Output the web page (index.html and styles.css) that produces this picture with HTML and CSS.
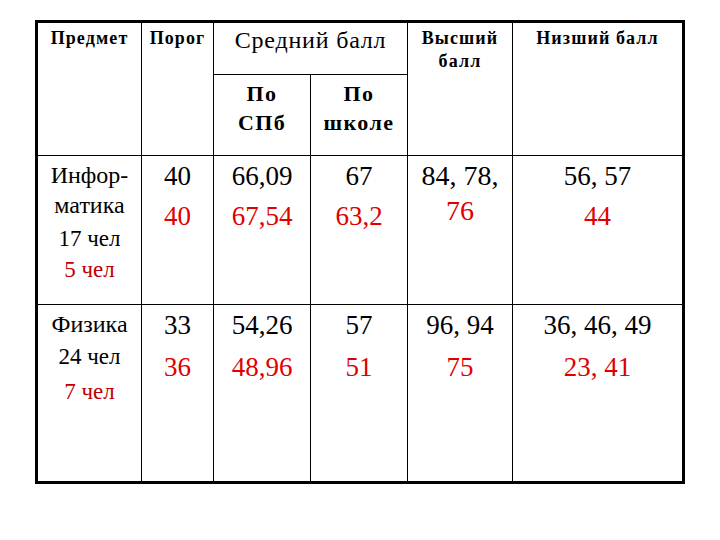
FILE: index.html
```html
<!DOCTYPE html>
<html lang="ru">
<head>
<meta charset="utf-8">
<title>Результаты</title>
<link rel="stylesheet" href="styles.css">
</head>
<body>
<div class="page">
<table class="grid">
<colgroup>
<col class="c1"><col class="c2"><col class="c3"><col class="c4"><col class="c5"><col class="c6">
</colgroup>
<tr class="rh1">
<td rowspan="2" class="h">Предмет</td>
<td rowspan="2" class="h">Порог</td>
<td colspan="2" class="avg">Средний балл</td>
<td rowspan="2" class="h">Высший<br>балл</td>
<td rowspan="2" class="h last">Низший балл</td>
</tr>
<tr class="rh2">
<td class="sub">По<br>СПб</td>
<td class="sub">По<br>школе</td>
</tr>
<tr class="r1">
<td class="subj first">
<div class="nm">Инфор-<br>матика</div>
<div class="cnt m4">17 чел</div>
<div class="cnt red2 m1">5 чел</div>
</td>
<td class="d"><div class="v">40</div><div class="v red">40</div></td>
<td class="d"><div class="v">66,09</div><div class="v red">67,54</div></td>
<td class="d"><div class="v">67</div><div class="v red">63,2</div></td>
<td class="d tight"><div class="v">84, 78,</div><div class="v red">76</div></td>
<td class="d last"><div class="v">56, 57</div><div class="v red">44</div></td>
</tr>
<tr class="r2">
<td class="subj first">
<div class="nm">Физика</div>
<div class="cnt m3">24 чел</div>
<div class="cnt red2 m5">7 чел</div>
</td>
<td class="d"><div class="v">33</div><div class="v red m2">36</div></td>
<td class="d"><div class="v">54,26</div><div class="v red m2">48,96</div></td>
<td class="d"><div class="v">57</div><div class="v red m2">51</div></td>
<td class="d"><div class="v">96, 94</div><div class="v red m2">75</div></td>
<td class="d last"><div class="v">36, 46, 49</div><div class="v red m2">23, 41</div></td>
</tr>
</table>
</div>
</body>
</html>
```
FILE: styles.css
```css
html, body {
  margin: 0;
  padding: 0;
  background: #ffffff;
}
body,
.grid,
.grid td,
.grid div {
  font-family: "Liberation Serif", "Times New Roman", serif;
  color: #000000;
}
.page {
  padding: 20px 0 0 35px;
}
.grid {
  border-collapse: separate;
  border-spacing: 0;
  table-layout: fixed;
  width: 650px;
  border: 3px solid #000000;
}
.c1 { width: 104px; }
.c2 { width: 72px; }
.c3 { width: 97px; }
.c4 { width: 97px; }
.c5 { width: 105px; }
.c6 { width: 169px; }

.grid td {
  padding: 0;
  vertical-align: top;
  text-align: center;
  border-right: 1px solid #000000;
  border-bottom: 1px solid #000000;
  box-sizing: border-box;
}
.grid td.last { border-right: none; }
.grid tr.r2 td { border-bottom: none; }

.rh1 { height: 52px; }
.rh2 { height: 81px; }
.r1 { height: 149px; }
.r2 { height: 176px; }

.grid td.h {
  font-weight: bold;
  font-size: 18px;
  line-height: 23px;
  letter-spacing: 1.1px;
  padding-top: 4px;
}
.grid td.avg {
  font-size: 24px;
  line-height: 30px;
  letter-spacing: 0.8px;
  padding-top: 2px;
}
.grid td.sub {
  font-weight: bold;
  font-size: 22px;
  line-height: 29px;
  letter-spacing: 1.4px;
  padding-top: 4px;
}

.grid td.subj { padding-top: 4px; }
.nm {
  font-size: 24px;
  line-height: 30px;
}
.cnt {
  font-size: 23px;
  line-height: 30px;
}
.m1 { margin-top: 1px; }
.m2 { margin-top: 2px; }
.m3 { margin-top: 3px; }
.m4 { margin-top: 4px; }
.m5 { margin-top: 5px; }

.v {
  font-size: 27px;
  line-height: 40px;
}
.grid td.tight { padding-top: 2px; }
.tight .v { line-height: 35px; font-size: 28px; }
.grid .red { color: #e00000; }
.grid .red2 { color: #c00000; }
```
